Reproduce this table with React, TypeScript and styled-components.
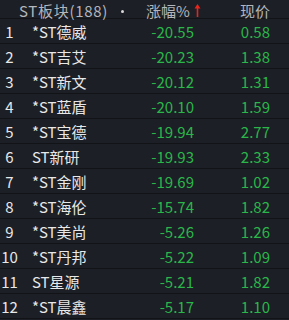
import React from 'react';
import styled, { createGlobalStyle } from 'styled-components';

const GlobalStyle = createGlobalStyle`
    html, body {
        margin: 0;
        padding: 0;
        background: #1c1f26;
    }
`;

type Stock = { rank: number; name: string; change: string; price: string };

const stocks: Stock[] = [
    { rank: 1, name: '*ST德威', change: '-20.55', price: '0.58' },
    { rank: 2, name: '*ST吉艾', change: '-20.23', price: '1.38' },
    { rank: 3, name: '*ST新文', change: '-20.12', price: '1.31' },
    { rank: 4, name: '*ST蓝盾', change: '-20.10', price: '1.59' },
    { rank: 5, name: '*ST宝德', change: '-19.94', price: '2.77' },
    { rank: 6, name: 'ST新研', change: '-19.93', price: '2.33' },
    { rank: 7, name: '*ST金刚', change: '-19.69', price: '1.02' },
    { rank: 8, name: '*ST海伦', change: '-15.74', price: '1.82' },
    { rank: 9, name: '*ST美尚', change: '-5.26', price: '1.26' },
    { rank: 10, name: '*ST丹邦', change: '-5.22', price: '1.09' },
    { rank: 11, name: 'ST星源', change: '-5.21', price: '1.82' },
    { rank: 12, name: '*ST晨鑫', change: '-5.17', price: '1.10' },
];

export default function App(): JSX.Element {
    return (
        <>
            <GlobalStyle />
            <Board>
                <HeaderRow>
                    <TitleCell>
                        ST板块(188)
                        <Dot />
                    </TitleCell>
                    <SortCell>
                        涨幅%
                        <SortArrow width="7" height="15" viewBox="0 0 7 15">
                            <path d="M3.5 1 L6.5 5.5 L4.3 5.5 L4.3 14 L2.7 14 L2.7 5.5 L0.5 5.5 Z" fill="#e5261c" />
                        </SortArrow>
                    </SortCell>
                    <HeadCell>现价</HeadCell>
                </HeaderRow>
                {stocks.map((s) => (
                    <Row key={s.rank}>
                        <Rank>{s.rank}</Rank>
                        <Name>{s.name}</Name>
                        <Value>{s.change}</Value>
                        <Value>{s.price}</Value>
                    </Row>
                ))}
            </Board>
        </>
    );
}

const Board = styled.div`
    width: 289px;
    height: 320px;
    overflow: hidden;
    background: #1c1f26;
    font-family: "Noto Sans CJK SC", "Noto Sans", sans-serif;
`;

const HeaderRow = styled.div`
    display: grid;
    grid-template-columns: 140px 64px 66px;
    height: 18px;
    align-items: center;
    border-bottom: 1px solid #111317;
    color: #b3b6bc;
    font-size: 15px;
`;

const TitleCell = styled.div`
    display: flex;
    align-items: center;
    padding-left: 19px;
    letter-spacing: 0.7px;
    white-space: nowrap;
`;

const Dot = styled.span`
    width: 3px;
    height: 3px;
    border-radius: 50%;
    background: #d8d8d8;
    margin-left: 13px;
    margin-top: 2px;
`;

const SortCell = styled.div`
    display: flex;
    align-items: center;
    padding-left: 6px;
    white-space: nowrap;
`;

const SortArrow = styled.svg`
    display: block;
    flex-shrink: 0;
    margin-left: 4px;
`;

const HeadCell = styled.div`
    text-align: right;
`;

const Row = styled.div`
    display: grid;
    grid-template-columns: 19px 121px 54px 76px;
    height: 24px;
    align-items: center;
    border-bottom: 1px solid #111317;
    font-size: 15px;
`;

const Rank = styled.div`
    text-align: center;
    color: #e8e8e8;
`;

const Name = styled.div`
    padding-left: 13px;
    color: #e8e8e8;
    white-space: nowrap;
`;

const Value = styled.div`
    text-align: right;
    color: #2bb64a;
`;
